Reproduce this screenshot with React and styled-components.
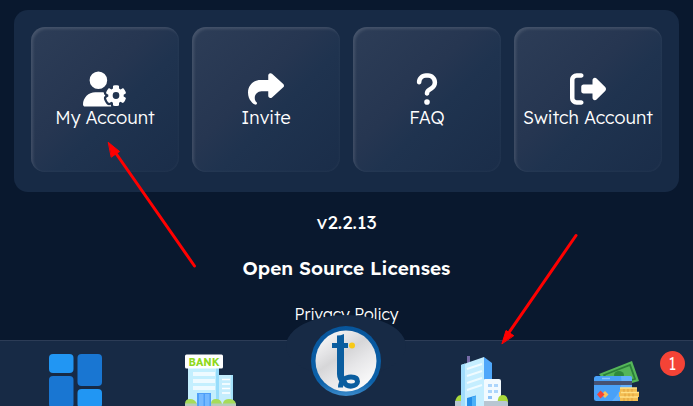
import React from 'react';
import styled, { createGlobalStyle } from 'styled-components';
import { FaUserGear, FaShare, FaQuestion, FaRightFromBracket } from 'react-icons/fa6';

const GlobalStyle = createGlobalStyle`
    * {
        box-sizing: border-box;
    }
    body {
        margin: 0;
        background: #09182e;
        color: #fff;
        font-family: Lexend, Inter, 'Liberation Sans', sans-serif;
    }
`;

const actions = [
    { label: 'My Account', Icon: FaUserGear, wide: true },
    { label: 'Invite', Icon: FaShare },
    { label: 'FAQ', Icon: FaQuestion },
    { label: 'Switch Account', Icon: FaRightFromBracket },
];

const DashboardIcon = () => (
    <svg width="54" height="54" viewBox="0 0 54 54" aria-hidden="true">
        <rect x="0" y="0" width="24.5" height="19" rx="4" fill="#2196f3" />
        <rect x="28.5" y="0" width="24.5" height="32" rx="4" fill="#1976d2" />
        <rect x="0" y="22" width="24.5" height="32" rx="4" fill="#1976d2" />
        <rect x="28.5" y="35" width="24.5" height="19" rx="4" fill="#2196f3" />
    </svg>
);

const BankIcon = () => (
    <svg width="54" height="54" viewBox="0 0 54 54" aria-hidden="true">
        <path d="M33 21H49V54H33Z" fill="#a4e2fb" />
        <path d="M35 21H47V54H35Z" fill="#c4edfd" />
        <path d="M38 25.500h8M38 30h8M38 34.500h8M38 39h8" stroke="#fff" strokeWidth="1.400" />
        <path d="M4 12H35V54H4Z" fill="#c4effe" />
        <path d="M32 14H35V54H32Z" fill="#96dcfb" />
        <path d="M9 20h22M9 27h22M9 34h22" stroke="#eefaff" strokeWidth="4" />
        <rect x="1" y="0.500" width="38" height="14" rx="1.500" fill="#fff" />
        <text x="20" y="11.500" textAnchor="middle" fontSize="10.500" fontWeight="700" fill="#8fd81c">BANK</text>
        <path d="M13 39H27V54H13Z" fill="#4e9ff8" />
        <path d="M15 40H19.500V54H15ZM21 40H25.500V54H21Z" fill="#75b9ff" />
        <path d="M1 50Q1 45 6 45Q11 45 13 50V54H1ZM27 50Q27 45 32 45Q37 45 38 50V54H27ZM39 49Q40 45 45 45Q51 45 52 50V54H39Z" fill="#a6dc59" />
        <path d="M1 49.500H13V54H1ZM27 49.500H52V54H27Z" fill="#b6cbbb" />
    </svg>
);

const TowerIcon = () => (
    <svg width="54" height="54" viewBox="-5 0 54 54" aria-hidden="true">
        <path d="M7 2H10V12H7Z" fill="#776ca8" />
        <path d="M24 3L32 9V54H24Z" fill="#4fa7fa" />
        <path d="M1 11L24 3V54H1Z" fill="#c5eeff" />
        <path d="M1 11L5 9.500V54H1Z" fill="#a0dcfc" />
        <path d="M7 15L22 10M7 22L22 17M7 29L22 24M7 36L22 31" stroke="#effbff" strokeWidth="2" />
        <path d="M24 26Q24 25 25 25H39Q41 25 41 27V54H24Z" fill="#f2faff" />
        <path d="M28 30h4v3h-4zM34 30h4v3h-4zM28 36h4v3h-4zM34 36h4v3h-4z" fill="#acd5fc" />
        <path d="M28 42h4v3h-4z" fill="#8dc2f8" />
        <path d="M-5 49Q-4 41 1 41V49ZM38 49Q37 41 43 41Q48 41 48 49Z" fill="#a9d93b" />
        <path d="M-5 47H1V54H-5ZM24 47H46Q48 47 48 49V54H24Z" fill="#b8c6d2" />
        <path d="M7 44L16 41.500V54H7Z" fill="#238de8" />
        <path d="M12 43L16 42V54H12Z" fill="#4bb1f7" />
    </svg>
);

const WalletIcon = () => (
    <svg width="54" height="54" viewBox="-3 0 54 54" aria-hidden="true">
        <path d="M6 20L39 7L46 27L18 35Z" fill="#55b659" />
        <path d="M11 21L37 11L42 25L19 31Z" fill="#55b659" stroke="#2b7f3a" strokeWidth="1.800" />
        <ellipse cx="26" cy="21" rx="5" ry="4" fill="#2f893d" />
        <rect x="1" y="22" width="38" height="25" rx="2.500" fill="#49a1f8" />
        <path d="M28 22H37Q39 22 39 24V44Q33 46 19 47Q31 35 28 22Z" fill="#62b0fd" />
        <path d="M1 27H39V31H1Z" fill="#465273" />
        <path d="M9 24.500h8" stroke="#8bc6ff" strokeWidth="1.500" />
        <path d="M12 37L15.500 40.500L12 44L8.500 40.500Z" fill="#f9c35b" />
        <path d="M7.500 36.500L11.500 40.500L7.500 44.500L4 40.500Z" fill="#f44336" />
        <path d="M27 34H44V38H46V43H45V47H27V43H26V38H27Z" fill="#f3bd51" />
        <path d="M27 34h17M28 38.500h18M27 43h18" stroke="#ffe087" strokeWidth="1.500" />
        <path d="M31 35v3M35 35v3M39 35v3M32 39.500v3M36 39.500v3M40 39.500v3M31 44v3M35 44v3M39 44v3" stroke="#d9963a" strokeWidth="0.700" />
    </svg>
);

const BrandLogo = () => (
    <svg width="70" height="70" viewBox="0 0 70 70" aria-hidden="true">
        <defs>
            <linearGradient id="ring" x1="0" y1="0" x2="0" y2="1">
                <stop offset="0" stopColor="#07559b" />
                <stop offset="0.800" stopColor="#0c61a9" />
                <stop offset="1" stopColor="#3c8bcb" />
            </linearGradient>
            <linearGradient id="disc" x1="0.150" y1="0" x2="0.850" y2="1">
                <stop offset="0" stopColor="#fafafa" />
                <stop offset="0.250" stopColor="#e4e4e6" />
                <stop offset="0.400" stopColor="#d6d6d8" />
                <stop offset="0.600" stopColor="#e6e6e8" />
                <stop offset="1" stopColor="#fff" />
            </linearGradient>
        </defs>
        <circle cx="35" cy="35" r="35" fill="url(#ring)" />
        <circle cx="35" cy="35" r="30.500" fill="url(#disc)" />
        <path d="M26 9.500Q30 9.500 33 8V49Q33 53 36 56L32 59Q26 55 26 48Z" fill="#0a5d9f" />
        <path d="M21 17H37V22H21Z" fill="#0a5d9f" />
        <circle cx="41" cy="19.500" r="3" fill="#f8c916" />
        <path d="M29.500 61.500C29.500 55 34 51 40 51C44 51 46.500 52.500 46.500 55.500C46.500 60.500 36 62.500 33 56" fill="none" stroke="#0a5d9f" strokeWidth="5" />
    </svg>
);

const tabs = [
    { name: 'Dashboard', Icon: DashboardIcon },
    { name: 'Bank', Icon: BankIcon },
    { name: 'Home', Icon: BrandLogo, center: true },
    { name: 'Business', Icon: TowerIcon },
    { name: 'Wallet', Icon: WalletIcon, count: 1 },
];

function App() {
    return (
        <Page>
            <GlobalStyle />
            <Panel>
                {actions.map(({ label, Icon, wide }) => (
                    <ActionCard key={label} type="button" $wide={wide}>
                        <Icon />
                        {label}
                    </ActionCard>
                ))}
            </Panel>
            <Info>
                <Version>v2.2.13</Version>
                <InfoLink href="#licenses" $strong>Open Source Licenses</InfoLink>
                <InfoLink href="#privacy">Privacy Policy</InfoLink>
            </Info>
            <TabBar>
                {tabs.map(({ name, Icon, center, count }) => (
                    <Tab key={name} type="button" aria-label={name}>
                        {center && <Bump />}
                        <TabIcon $center={center}><Icon /></TabIcon>
                        {count && <Badge>{count}</Badge>}
                    </Tab>
                ))}
            </TabBar>
            <Arrows width="693" height="406" viewBox="0 0 693 406" aria-hidden="true">
                <path d="M194.500 266L115 152M576 235.500L508 334" />
                <path className="head" d="M108.500 142.500L119.500 151.500L111.500 157ZM502 343.500L506 330.500L513.500 335.500Z" />
            </Arrows>
        </Page>
    );
}

const Page = styled.div`
    position: relative;
    display: flex;
    flex-direction: column;
    height: 100vh;
    padding-top: 10px;
    overflow: hidden;
`;

const Panel = styled.section`
    display: grid;
    grid-template-columns: repeat(4, 1fr);
    gap: 13px;
    margin: 0 14px;
    padding: 17px 17px 20px;
    border-radius: 14px;
    background: #172a45;
`;

const ActionCard = styled.button`
    display: flex;
    flex-direction: column;
    align-items: center;
    justify-content: center;
    height: 145px;
    padding: 0;
    border: 0;
    border-radius: 14px;
    background: linear-gradient(135deg, #2d3d57 0%, #263651 42%, #1f334f 58%, #1a2d49 100%);
    box-shadow: inset 2px 2px 3px rgba(255, 255, 255, 0.12), inset -1px -1px 2px rgba(255, 255, 255, 0.03);
    color: #fff;
    font-family: inherit;
    font-size: 18px;
    font-weight: 350;
    line-height: 22px;
    white-space: nowrap;

    svg {
        width: ${props => (props.$wide ? '44px' : '36px')};
        height: 36px;
    }
`;

const Info = styled.div`
    display: flex;
    flex: 1;
    flex-direction: column;
    align-items: center;
    gap: 22px;
    padding-top: 18px;
`;

const Version = styled.div`
    font-size: 19px;
    line-height: 24px;
`;

const InfoLink = styled.a`
    color: #fff;
    font-size: ${props => (props.$strong ? '19px' : '16px')};
    font-weight: ${props => (props.$strong ? 600 : 350)};
    line-height: 24px;
    text-decoration: none;
`;

const TabBar = styled.nav`
    display: grid;
    grid-template-columns: repeat(5, 1fr);
    flex: none;
    height: 66px;
    padding: 0 8px;
    border-top: 1px solid #2c3c56;
    background: #172a45;
`;

const Tab = styled.button`
    position: relative;
    display: flex;
    justify-content: center;
    align-items: flex-start;
    padding: 13px 0 0;
    border: 0;
    background: none;
    color: #fff;
    font-family: inherit;
`;

const TabIcon = styled.span`
    position: relative;
    display: block;
    margin-top: ${props => (props.$center ? '-28px' : '0')};

    svg {
        display: block;
        overflow: visible;
    }
`;

/* raised part of the bar behind the logo */
const Bump = styled.span`
    position: absolute;
    top: -26px;
    left: 50%;
    width: 120px;
    height: 62px;
    margin-left: -60px;
    border-radius: 50%;
    background: #172a45;
`;

const Badge = styled.span`
    position: absolute;
    top: 10px;
    right: 0;
    width: 25px;
    height: 25px;
    border-radius: 50%;
    background: #f44336;
    font-size: 18px;
    font-weight: 300;
    line-height: 25px;
    text-align: center;
`;

const Arrows = styled.svg`
    position: absolute;
    top: 0;
    left: 0;
    pointer-events: none;

    path {
        fill: none;
        stroke: #f00;
        stroke-width: 3;
        stroke-linecap: round;
    }

    .head {
        fill: #f00;
        stroke-width: 1;
    }
`;

export default App;
